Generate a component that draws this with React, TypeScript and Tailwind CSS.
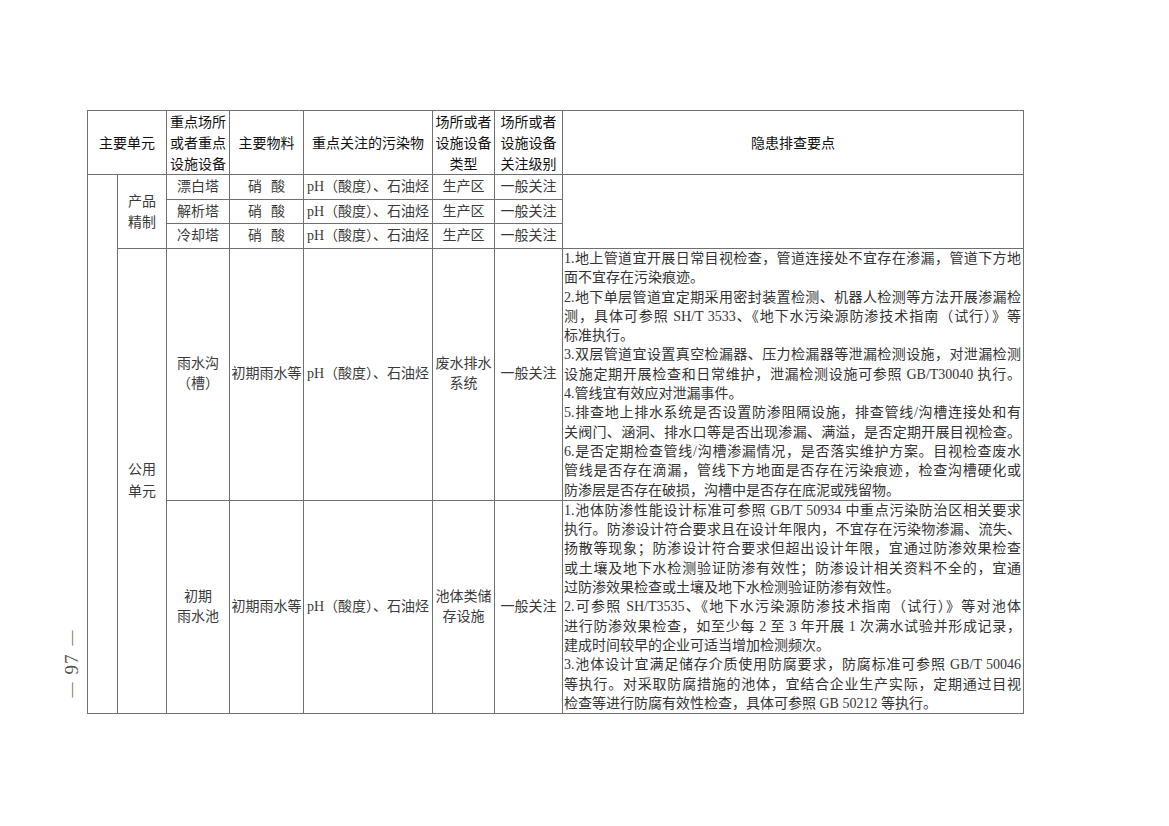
import React from "react";

const J = ({ children }: { children: React.ReactNode }) => (
  <div className="text-justify [text-align-last:justify]">{children}</div>
);
const L = ({ children }: { children: React.ReactNode }) => <div className="text-left">{children}</div>;

const bd = "border border-[#707070]";
const hd = `${bd} align-middle text-center text-[14px] leading-[21px] text-[#111] font-['Noto_Sans_CJK_SC',sans-serif]`;
const td = `${bd} align-middle text-center text-[14px] leading-[20px] text-[#3a3a3a] p-0`;

export default function App() {
  return (
    <div className="w-[1169px] h-[826px] bg-white flex pt-[110px] font-['Liberation_Serif','Noto_Sans_CJK_SC',serif]">
      <div className="w-[87px] flex flex-col justify-end h-[604px] pl-[63px] pb-[9px]">
        <div className="relative w-[15px] h-[82px]">
          <span className="absolute left-1/2 top-1/2 -translate-x-1/2 -translate-y-1/2 -rotate-90 text-[15px] leading-[15px] text-[#555] whitespace-nowrap flex items-center gap-[8px]">
            <span>—</span>
            <span className="text-[19px] tracking-[1px]">97</span>
            <span>—</span>
          </span>
        </div>
      </div>
      <table className="border-collapse table-fixed w-[936px] self-start">
        <colgroup>
          <col className="w-[30px]" />
          <col className="w-[49px]" />
          <col className="w-[63px]" />
          <col className="w-[74px]" />
          <col className="w-[129px]" />
          <col className="w-[62px]" />
          <col className="w-[68px]" />
          <col className="w-[461px]" />
        </colgroup>
        <tbody>
          <tr className="h-[63px]">
            <td colSpan={2} className={hd}>主要单元</td>
            <td className={hd}>
              重点场所
              <br />
              或者重点
              <br />
              设施设备
            </td>
            <td className={hd}>主要物料</td>
            <td className={hd}>重点关注的污染物</td>
            <td className={hd}>
              场所或者
              <br />
              设施设备
              <br />
              类型
            </td>
            <td className={hd}>
              场所或者
              <br />
              设施设备
              <br />
              关注级别
            </td>
            <td className={hd}>隐患排查要点</td>
          </tr>
          <tr className="h-[25px]">
            <td rowSpan={5} className={td}></td>
            <td rowSpan={3} className={`${td} leading-[21px]`}>
              产品
              <br />
              精制
            </td>
            <td className={td}>漂白塔</td>
            <td className={`${td} tracking-[9px] pl-[9px]`}>硝酸</td>
            <td className={`${td} whitespace-nowrap`}>pH（酸度）、石油烃</td>
            <td className={td}>生产区</td>
            <td className={td}>一般关注</td>
            <td rowSpan={3} className={td}></td>
          </tr>
          <tr className="h-[24px]">
            <td className={td}>解析塔</td>
            <td className={`${td} tracking-[9px] pl-[9px]`}>硝酸</td>
            <td className={`${td} whitespace-nowrap`}>pH（酸度）、石油烃</td>
            <td className={td}>生产区</td>
            <td className={td}>一般关注</td>
          </tr>
          <tr className="h-[25px]">
            <td className={td}>冷却塔</td>
            <td className={`${td} tracking-[9px] pl-[9px]`}>硝酸</td>
            <td className={`${td} whitespace-nowrap`}>pH（酸度）、石油烃</td>
            <td className={td}>生产区</td>
            <td className={td}>一般关注</td>
          </tr>
          <tr>
            <td rowSpan={2} className={`${td} leading-[22px]`}>
              公用
              <br />
              单元
            </td>
            <td className={`${td} leading-[19px]`}>
              雨水沟
              <br />
              （槽）
            </td>
            <td className={`${td} whitespace-nowrap`}>初期雨水等</td>
            <td className={`${td} whitespace-nowrap`}>pH（酸度）、石油烃</td>
            <td className={`${td} leading-[19px]`}>
              废水排水
              <br />
              系统
            </td>
            <td className={td}>一般关注</td>
            <td className={`${bd} align-top text-[14px] leading-[19.3px] text-[#333] pl-[1px] pr-[2px]`}>
              <J>1.地上管道宜开展日常目视检查，管道连接处不宜存在渗漏，管道下方地</J>
              <L>面不宜存在污染痕迹。</L>
              <J>2.地下单层管道宜定期采用密封装置检测、机器人检测等方法开展渗漏检</J>
              <J>测，具体可参照 SH/T 3533、《地下水污染源防渗技术指南（试行）》等</J>
              <L>标准执行。</L>
              <J>3.双层管道宜设置真空检漏器、压力检漏器等泄漏检测设施，对泄漏检测</J>
              <J>设施定期开展检查和日常维护，泄漏检测设施可参照 GB/T30040 执行。</J>
              <L>4.管线宜有效应对泄漏事件。</L>
              <J>5.排查地上排水系统是否设置防渗阻隔设施，排查管线/沟槽连接处和有</J>
              <J>关阀门、涵洞、排水口等是否出现渗漏、满溢，是否定期开展目视检查。</J>
              <J>6.是否定期检查管线/沟槽渗漏情况，是否落实维护方案。目视检查废水</J>
              <J>管线是否存在滴漏，管线下方地面是否存在污染痕迹，检查沟槽硬化或</J>
              <L>防渗层是否存在破损，沟槽中是否存在底泥或残留物。</L>
            </td>
          </tr>
          <tr>
            <td className={`${td} leading-[19px]`}>
              初期
              <br />
              雨水池
            </td>
            <td className={`${td} whitespace-nowrap`}>初期雨水等</td>
            <td className={`${td} whitespace-nowrap`}>pH（酸度）、石油烃</td>
            <td className={`${td} leading-[19px]`}>
              池体类储
              <br />
              存设施
            </td>
            <td className={td}>一般关注</td>
            <td className={`${bd} align-top text-[14px] leading-[19.3px] text-[#333] pl-[1px] pr-[2px]`}>
              <J>1.池体防渗性能设计标准可参照 GB/T 50934 中重点污染防治区相关要求</J>
              <J>执行。防渗设计符合要求且在设计年限内，不宜存在污染物渗漏、流失、</J>
              <J>扬散等现象；防渗设计符合要求但超出设计年限，宜通过防渗效果检查</J>
              <J>或土壤及地下水检测验证防渗有效性；防渗设计相关资料不全的，宜通</J>
              <L>过防渗效果检查或土壤及地下水检测验证防渗有效性。</L>
              <J>2.可参照 SH/T3535、《地下水污染源防渗技术指南（试行）》等对池体</J>
              <J>进行防渗效果检查，如至少每 2 至 3 年开展 1 次满水试验并形成记录，</J>
              <L>建成时间较早的企业可适当增加检测频次。</L>
              <J>3.池体设计宜满足储存介质使用防腐要求，防腐标准可参照 GB/T 50046</J>
              <J>等执行。对采取防腐措施的池体，宜结合企业生产实际，定期通过目视</J>
              <L>检查等进行防腐有效性检查，具体可参照 GB 50212 等执行。</L>
            </td>
          </tr>
        </tbody>
      </table>
    </div>
  );
}
